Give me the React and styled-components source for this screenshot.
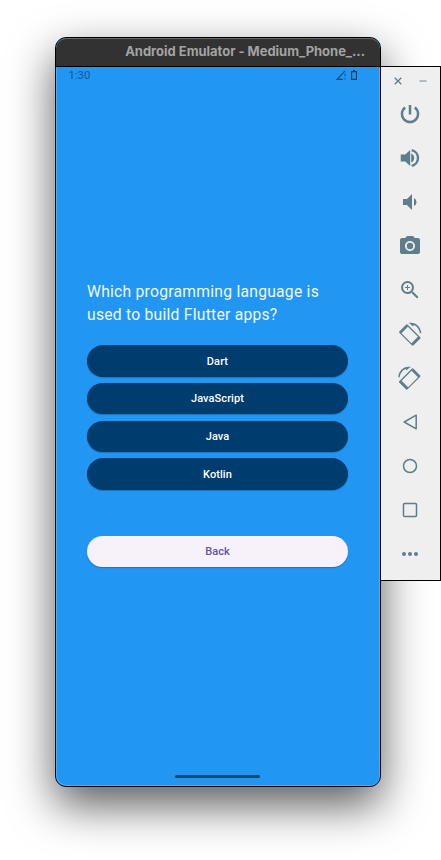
import React from "react";
import styled, { createGlobalStyle } from "styled-components";
import { MdVolumeDown, MdPhotoCamera, MdZoomIn } from "react-icons/md";

const GlobalStyle = createGlobalStyle`
  *, *::before, *::after { box-sizing: border-box; }
  body { margin: 0; background: #fff; overflow: hidden; }
`;

const Desktop = styled.main`
  width: 441px;
  height: 860px;
  display: flex;
  align-items: flex-start;
  padding: 37px 0 0 55px;
  overflow: hidden;
  background: #fff;
`;

const EmulatorWindow = styled.section`
  flex: none;
  width: 326px;
  height: 750px;
  display: flex;
  flex-direction: column;
  border: 1px solid #000;
  border-radius: 11px;
  overflow: hidden;
  background: #2196f3;
  box-shadow: 0 18px 45px rgba(0, 0, 0, 0.65);
`;

const TitleBar = styled.header`
  flex: none;
  height: 29px;
  display: flex;
  justify-content: flex-end;
  align-items: center;
  padding: 0 15px 3px 0;
  border-bottom: 1px solid #000;
  border-radius: 10px 10px 0 0;
  background: #323232;
  box-shadow: inset 0 1px 0 #686868;
  color: #a3a3a3;
  font: 700 13px/16px Inter, sans-serif;
  letter-spacing: -0.02px;
  white-space: nowrap;
`;

const Screen = styled.div`
  flex: 1;
  display: flex;
  flex-direction: column;
  border-radius: 0 0 10px 10px;
  box-shadow: inset 1px -1px 0 #4eaaf4, inset -1px 0 0 #4eaaf4;
  font-family: Roboto, sans-serif;
`;

const StatusBar = styled.div`
  height: 17px;
  display: flex;
  justify-content: space-between;
  align-items: flex-start;
  padding: 0 23px 0 12.5px;
  color: #14598f;
  font-size: 11.3px;
  line-height: 17px;
`;

const StatusIcons = styled.div`
  display: flex;
  align-items: center;
  gap: 5px;
  padding-top: 3px;
  svg { display: block; }
`;

const Quiz = styled.div`
  flex: 1;
  display: flex;
  flex-direction: column;
  padding: 197px 32px 0 31px;
`;

const Question = styled.h1`
  margin: 0 0 19.4px;
  color: #f2f9ff;
  font-size: 15.7px;
  font-weight: 400;
  line-height: 22.5px;
  letter-spacing: 0.24px;
`;

const Answers = styled.div`
  display: flex;
  flex-direction: column;
  gap: 6.3px;
`;

const PillButton = styled.button`
  width: 100%;
  height: 31.4px;
  margin: ${(p) => (p.$secondary ? "46px 0 0" : "0")};
  padding: 0;
  border: 0;
  border-radius: 16px;
  background: ${(p) => (p.$secondary ? "#f7f2fa" : "#003c6e")};
  color: ${(p) => (p.$secondary ? "#6750a4" : "#fff")};
  box-shadow: 0 1px 1px rgba(0, 0, 0, 0.22);
  font: 500 11px/31px Roboto, sans-serif;
  letter-spacing: 0.08px;
`;

const HomeHandle = styled.div`
  width: 85px;
  height: 3px;
  margin: 0 0 8.5px 119px;
  border-radius: 2px;
  background: #12486f;
`;

const Toolbar = styled.aside`
  flex: none;
  width: 61px;
  height: 515px;
  margin: 29px 0 0 -1px;
  display: flex;
  flex-direction: column;
  align-items: center;
  border: 1px solid #000;
  background: #efefef;
  color: #607d8b;
  z-index: 1;
`;

const WindowControls = styled.div`
  height: 25px;
  display: flex;
  align-items: center;
  gap: 15px;
  padding-top: 3px;
  svg { display: block; }
`;

const Tools = styled.div`
  display: flex;
  flex-direction: column;
  gap: 20px;
  padding: 10px 1px 0 0;
`;

const ToolButton = styled.button`
  width: 24px;
  height: 24px;
  padding: 0;
  border: 0;
  background: none;
  color: inherit;
  svg { display: block; width: 24px; height: 24px; }
`;

const Power = () => (
  <svg viewBox="0 0 24 24" fill="none" stroke="currentColor" strokeWidth="2.5">
    <path d="M12 3v9.5M7.2 5.5a8.1 8.1 0 1 0 9.6 0" />
  </svg>
);

const VolumeUp = () => (
  <svg viewBox="0 0 24 24" fill="currentColor">
    <path d="M2.7 8.5v7h4.5l5 4.5V4l-5 4.5ZM13.2 7.6v8.8q3-1.3 3-4.4t-3-4.4Z" />
    <path d="M13.7 4.1a8.1 8.1 0 0 1 0 15.8" fill="none" stroke="currentColor" strokeWidth="2.4" />
  </svg>
);

const RotateShapes = () => (
  <>
    <path
      fillRule="evenodd"
      d="M8 2.8 1.5 9.2q-.9.9 0 1.8l12.3 12.3q.9.9 1.8 0l6.5-6.5q.9-.9 0-1.8L9.8 2.8q-.9-.9-1.8 0ZM9.9 4.8 19.9 14.8 13.4 21.2 3.5 11.2Z"
    />
    <path d="M10.2 1.1C17-.7 22.7 4.3 23.3 11.2h-1.4C21.3 7.5 19.2 4.4 16 3L14.9 4.2 11.8 1.4Z" />
  </>
);

const RotateLeft = () => (
  <svg viewBox="0 0 24 24" fill="currentColor"><RotateShapes /></svg>
);
const RotateRight = () => (
  <svg viewBox="0 0 24 24" fill="currentColor">
    <g transform="translate(23.5 0) scale(-1 1)"><RotateShapes /></g>
  </svg>
);

const Back = () => (
  <svg viewBox="0 0 24 24" fill="none" stroke="currentColor" strokeWidth="1.5" strokeLinejoin="round">
    <path d="M18.2 5.2v13.6L6.2 12Z" />
  </svg>
);
const Home = () => (
  <svg viewBox="0 0 24 24" fill="none" stroke="currentColor" strokeWidth="1.5">
    <circle cx="12" cy="12" r="6.5" />
  </svg>
);
const Overview = () => (
  <svg viewBox="0 0 24 24" fill="none" stroke="currentColor" strokeWidth="1.5">
    <rect x="5.5" y="5.5" width="13" height="13" rx="1" />
  </svg>
);
const More = () => (
  <svg viewBox="0 0 24 24" fill="currentColor">
    <circle cx="6" cy="12" r="2" />
    <circle cx="12" cy="12" r="2" />
    <circle cx="18" cy="12" r="2" />
  </svg>
);

const tools = [
  ["Power", Power],
  ["Volume up", VolumeUp],
  ["Volume down", MdVolumeDown],
  ["Take screenshot", MdPhotoCamera],
  ["Zoom", MdZoomIn],
  ["Rotate left", RotateLeft],
  ["Rotate right", RotateRight],
  ["Back", Back],
  ["Home", Home],
  ["Overview", Overview],
  ["More", More],
];

const answers = ["Dart", "JavaScript", "Java", "Kotlin"];

export default function App() {
  return (
    <>
      <GlobalStyle />
      <Desktop>
        <EmulatorWindow>
          <TitleBar>Android Emulator - Medium_Phone_...</TitleBar>
          <Screen>
            <StatusBar>
              <span>1:30</span>
              <StatusIcons>
                <svg width="10" height="10" viewBox="0 0 10 10" fill="none" stroke="currentColor">
                  <path d="M9 .8 1.2 9.3h5.6" stroke="#104a75" strokeWidth="1.2" />
                  <path d="M9 3.5v3M9 8v1.5" />
                </svg>
                <svg width="6" height="10" viewBox="0 0 6 10" fill="none" stroke="#0c3e64" strokeWidth="1.2">
                  <path d="M.6 1.6h4.8v7.8H.6ZM2 .6h2" />
                </svg>
              </StatusIcons>
            </StatusBar>
            <Quiz>
              <Question>
                Which programming language is<br />used to build Flutter apps?
              </Question>
              <Answers>
                {answers.map((a) => <PillButton key={a}>{a}</PillButton>)}
              </Answers>
              <PillButton $secondary>Back</PillButton>
            </Quiz>
            <HomeHandle />
          </Screen>
        </EmulatorWindow>
        <Toolbar>
          <WindowControls>
            <svg width="10" height="10" viewBox="0 0 10 10" fill="none" stroke="currentColor" strokeWidth="1.3">
              <path d="m1.7 1.7 6.6 6.6m0-6.6L1.7 8.3" />
            </svg>
            <svg width="10" height="10" viewBox="0 0 10 10" fill="none" stroke="#a6b5bc" strokeWidth="1.8">
              <path d="M1.5 5h7" />
            </svg>
          </WindowControls>
          <Tools>
            {tools.map(([label, Icon]) => (
              <ToolButton key={label} aria-label={label}><Icon /></ToolButton>
            ))}
          </Tools>
        </Toolbar>
      </Desktop>
    </>
  );
}
